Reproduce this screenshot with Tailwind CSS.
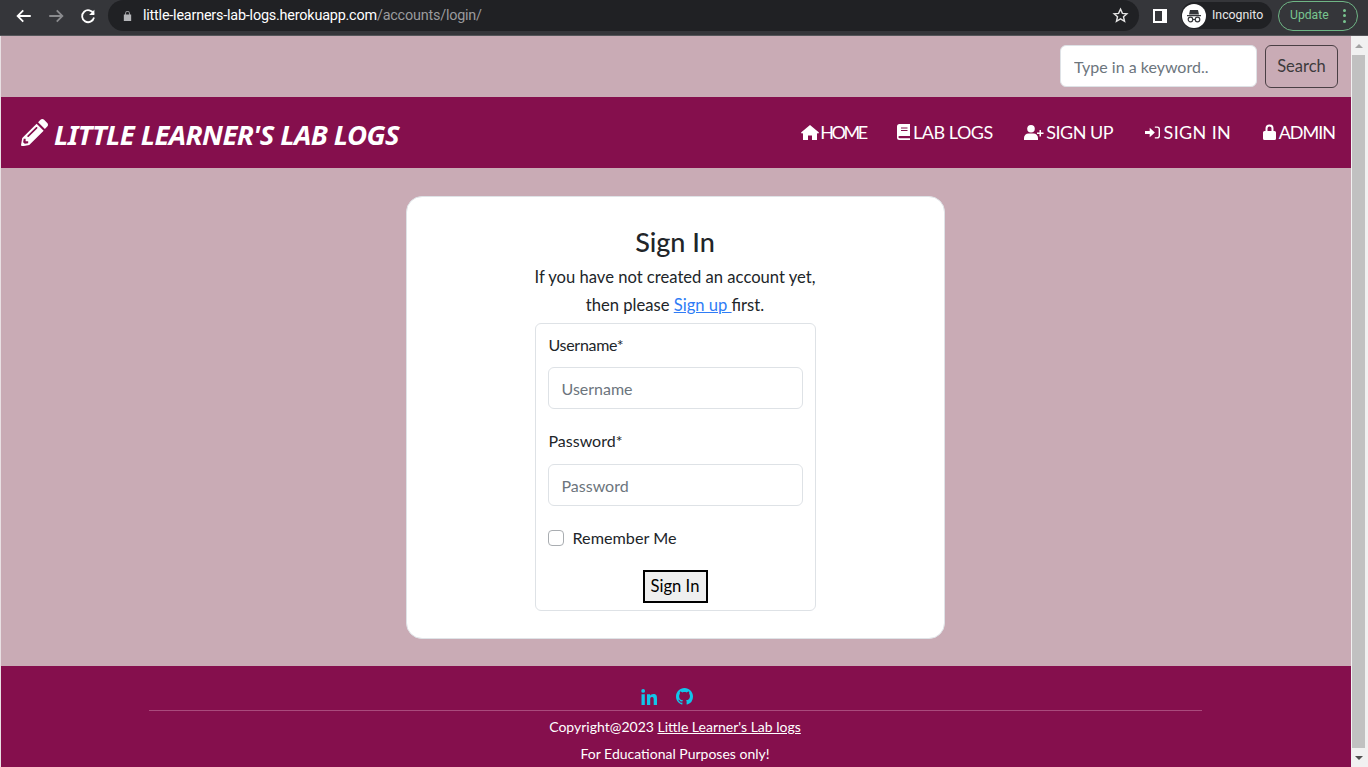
<!DOCTYPE html>
<html lang="en">
<head>
    <meta charset="UTF-8">
    <meta name="viewport" content="width=device-width, initial-scale=1.0">
    <title>Sign In</title>
    <script src="https://cdn.jsdelivr.net/npm/@tailwindcss/browser@4"></script>
</head>
<body class="h-[767px] w-[1368px] overflow-hidden bg-[#c9abb5] font-['Lato',sans-serif] text-[#212529]">
    <!-- browser toolbar -->
    <div class="flex h-[36px] items-center bg-[#35363a] border-b border-[#55565a] pb-[4px]">
        <div class="flex w-[108px] items-center pl-[15px] gap-[14px]">
            <svg class="size-[18px]" viewBox="0 0 24 24" fill="none" stroke="#fff" stroke-width="2.4"><path d="M21 12H4M11 4.5 3.5 12l7.5 7.5"/></svg>
            <svg class="size-[18px]" viewBox="0 0 24 24" fill="none" stroke="#8a8b8e" stroke-width="2.4"><path d="M3 12h17M13 4.5l7.5 7.5-7.5 7.5"/></svg>
            <svg class="size-[18px]" viewBox="0 0 24 24" fill="none" stroke="#fff" stroke-width="2.4"><path d="M19.5 9A8 8 0 1 0 20 14"/><path d="M20.5 3.5v7h-7" fill="#fff" stroke="none"/></svg>
        </div>
        <div class="flex h-[31px] w-[1031px] items-center rounded-full bg-[#202124] pl-[14px] pr-[10px]">
            <svg class="mr-[10px] size-[11px]" viewBox="0 0 12 12" fill="#b4b5b8"><path d="M2 5h8v7H2zM3.5 5V3.5a2.5 2.5 0 0 1 5 0V5H7.6V3.5a1.6 1.6 0 0 0-3.2 0V5z"/></svg>
            <span class="text-[14.4px] tracking-[-0.2px] text-white font-['Roboto',sans-serif]">little-learners-lab-logs.herokuapp.com<span class="text-[#9a9b9e]">/accounts/login/</span></span>
            <svg class="ml-auto size-[17px]" viewBox="0 0 24 24" fill="none" stroke="#e3e3e3" stroke-width="2"><path d="m12 3 2.7 6 6.3.6-4.8 4.2 1.5 6.4L12 16.800 6.300 20.200l1.500-6.400L3 9.600 9.300 9z"/></svg>
        </div>
        <svg class="ml-[13px] size-[16px]" viewBox="0 0 16 16"><path fill="#fff" d="M1 1h14v14H1z"/><path fill="#35363a" d="M3 3h7v10H3z"/></svg>
        <div class="ml-[13px] flex h-[27px] w-[91px] items-center rounded-full bg-[#202124] pl-[1px]">
            <div class="flex size-[24px] items-center justify-center rounded-full bg-white">
                <svg class="size-[20px]" viewBox="0 0 20 20" fill="#35363a"><path d="M3 9h14v1.2H3zM6 4h8l1 4.4H5z"/><circle cx="6.500" cy="13.500" r="2.300" fill="none" stroke="#35363a" stroke-width="1.200"/><circle cx="13.500" cy="13.500" r="2.300" fill="none" stroke="#35363a" stroke-width="1.200"/><path d="M8.500 13h3v1h-3z"/></svg>
            </div>
            <span class="ml-[6px] text-[12.3px] text-[#e8e8e8] font-['Roboto',sans-serif]">Incognito</span>
        </div>
        <div class="ml-[6px] flex h-[30px] w-[80px] items-center rounded-full border border-[#6fb585] pl-[11px]">
            <span class="text-[12.2px] text-[#78c48f] font-['Roboto',sans-serif]">Update</span>
            <span class="ml-[14px] flex flex-col gap-[2.5px]">
                <i class="block size-[3px] rounded-full bg-[#78c48f]"></i>
                <i class="block size-[3px] rounded-full bg-[#78c48f]"></i>
                <i class="block size-[3px] rounded-full bg-[#78c48f]"></i>
            </span>
        </div>
    </div>

    <div class="flex h-[731px]">
        <div class="flex w-[1351px] flex-col border-l border-[#e8e0e3]">
            <!-- search -->
            <form class="flex h-[61px] items-center justify-end gap-2 pr-[13px]">
                <input type="text" placeholder="Type in a keyword.." class="-mt-[1px] h-[42px] w-[197px] rounded-md border border-[#dee2e6] bg-white px-[13px] text-[16px] placeholder:text-[#6c757d]">
                <button type="button" class="h-[43px] w-[73px] rounded-md border border-[#4a3f44] text-[16.5px] text-[#3d3a3c]">Search</button>
            </form>

            <!-- navbar -->
            <nav class="flex h-[71px] items-center bg-[#850f4d] pl-[20px] pr-[16px] text-white">
                <svg class="size-[27px]" viewBox="0 0 512 512" fill="#fff"><path d="M497.900 142.100 452 188 324 60l45.900-45.900c18.700-18.700 49.100-18.700 67.900 0l60.100 60.100c18.800 18.700 18.800 49.100 0 67.900zM295.900 88 23.300 360.600 1.200 487.100c-3 17.100 11.900 32 29 28.900l126.500-22.200L429.300 221.200zM124.100 337.900c-6.400-6.400-6.400-16.400 0-22.800l160-160c6.400-6.400 16.400-6.400 22.800 0s6.400 16.400 0 22.800l-160 160c-6.400 6.400-16.400 6.400-22.800 0zM88 424h48v36.300l-64.500 11.300-31.100-31.100L51.700 376H88z"/></svg>
                <span class="ml-[6px] mt-[4px] font-['Noto_Sans',sans-serif] text-[27.6px] leading-none font-bold italic tracking-[-0.6px]">LITTLE LEARNER'S LAB LOGS</span>
                <div class="ml-auto flex items-center gap-[31.5px] text-[18px] -mt-[1px]">
                    <a class="flex items-center gap-[1px] tracking-[-2.5px]" href="#">
                        <svg class="h-[15px] w-[18px]" viewBox="0 0 18 15" fill="#fff"><path d="M9 0 0 7.500l1 1.200 1-.8V15h5v-4.500h4V15h5V7.900l1 .8 1-1.200z"/></svg>
                        HOME
                    </a>
                    <a class="flex items-center gap-[3px] tracking-[-0.5px]" href="#">
                        <svg class="h-[16px] w-[13px]" viewBox="0 0 13 16" fill="#fff"><path d="M2.500 0H13v12H2.500a1 1 0 0 0 0 2.200H13V16H2.500A2.500 2.500 0 0 1 0 13.500v-11A2.500 2.500 0 0 1 2.500 0z"/><path d="M4 3.500h6.500v1H4zM4 6h6.500v1H4z" fill="#850f4d"/></svg>
                        LAB LOGS
                    </a>
                    <a class="flex items-center gap-[2px] tracking-[-0.5px]" href="#">
                        <svg class="h-[15px] w-[20px]" viewBox="0 0 20 15" fill="#fff"><circle cx="7" cy="3.800" r="3.800"/><path d="M0 15v-2a4.500 4.500 0 0 1 4.500-4.500h5A4.500 4.500 0 0 1 14 13v2zM15.500 5h1.500v2.500h2.500V9H17v2.500h-1.500V9H13V7.500h2.500z"/></svg>
                        SIGN UP
                    </a>
                    <a class="flex items-center gap-[4px] tracking-[0.35px]" href="#">
                        <svg class="h-[13px] w-[15px]" viewBox="0 0 16 13" fill="#fff"><path d="M0 4.800h5V1.500l5.500 5-5.500 5V8.200H0z"/><path d="M10.500 0H13a3 3 0 0 1 3 3v7a3 3 0 0 1-3 3h-2.500v-1.500H13a1.500 1.500 0 0 0 1.500-1.500V3A1.500 1.500 0 0 0 13 1.500h-2.500z"/></svg>
                        SIGN IN
                    </a>
                    <a class="flex items-center gap-[3px] tracking-[-1px]" href="#">
                        <svg class="h-[16px] w-[13px]" viewBox="0 0 13 16" fill="#fff"><path d="M1.500 7H2.500V4.500a4 4 0 0 1 8 0V7h1A1.500 1.500 0 0 1 13 8.500v6a1.500 1.500 0 0 1-1.500 1.500h-10A1.500 1.500 0 0 1 0 14.500v-6A1.500 1.500 0 0 1 1.500 7zM4.500 7h4V4.500a2 2 0 0 0-4 0z"/></svg>
                        ADMIN
                    </a>
                </div>
            </nav>

            <!-- sign in card -->
            <main class="flex h-[498px] justify-center pt-[28px] pr-[2px]">
                <div class="flex h-[443px] w-[539px] flex-col items-center rounded-[16px] border border-[#dfe3e7] bg-white pt-[27px]">
                    <h1 class="text-[27px] leading-[36px] font-medium">Sign In</h1>
                    <p class="mt-[3px] text-[16.6px] leading-[28px]">If you have not created an account yet,</p>
                    <p class="text-[16.6px] leading-[28px]">then please <a href="#" class="text-[#2f7cf6] underline">Sign up </a>first.</p>
                    <form class="mt-[4px] h-[288px] w-[281px] rounded-md border border-[#dee2e6] px-[12px] pt-[9px] text-[16px]">
                        <label class="block pl-[1px] leading-[24px] tracking-[-0.3px]">Username*</label>
                        <input type="text" placeholder="Username" class="mt-[10px] block h-[42px] w-[255px] rounded-md border border-[#dee2e6] px-[13px] placeholder:text-[#6c757d]">
                        <label class="mt-[20px] block pl-[1px] leading-[24px]">Password*</label>
                        <input type="password" placeholder="Password" class="mt-[11px] block h-[42px] w-[255px] rounded-md border border-[#dee2e6] px-[13px] placeholder:text-[#6c757d]">
                        <label class="mt-[20px] flex h-[24px] items-center gap-[9px] text-[16.2px]">
                            <input type="checkbox" class="size-[16px] appearance-none rounded-[4px] border border-[#a9adb1] bg-white">
                            Remember Me
                        </label>
                        <div class="mt-[20px] flex justify-center">
                            <button type="button" class="h-[33px] w-[65px] border-2 border-black bg-[#efefef] text-[16.6px] text-black">Sign In</button>
                        </div>
                    </form>
                </div>
            </main>

            <!-- footer -->
            <footer class="flex h-[101px] flex-col items-center bg-[#850f4d] pr-[2px] text-white">
                <div class="flex h-[47px] w-[1053px] items-center justify-center gap-[19px] border-b border-[#a94a7c] pt-[17px] pr-[16px]">
                    <svg class="size-[16px]" viewBox="0 0 16 16" fill="#12c5ea"><path d="M.5 5.300h3.300V16H.5zM2.150 0a1.900 1.900 0 1 1 0 3.800 1.900 1.900 0 0 1 0-3.800zM6 5.300h3.150v1.500c.5-.9 1.600-1.750 3.300-1.750 3.400 0 3.550 2.250 3.550 5.200V16h-3.300v-5c0-1.300 0-2.900-1.700-2.900s-1.800 1.300-1.800 2.700V16H6z"/></svg>
                    <svg class="size-[17px]" viewBox="0 0 16 16" fill="#12c5ea"><path d="M8 0C3.580 0 0 3.580 0 8c0 3.540 2.290 6.530 5.470 7.590.4.070.55-.17.550-.38 0-.19-.01-.82-.01-1.490-2.010.37-2.530-.49-2.690-.94-.09-.23-.48-.94-.82-1.130-.28-.15-.68-.52-.01-.53.630-.01 1.080.58 1.230.82.720 1.210 1.870.87 2.330.66.070-.52.280-.87.510-1.070-1.780-.2-3.640-.89-3.640-3.950 0-.87.310-1.590.820-2.150-.08-.2-.36-1.020.08-2.120 0 0 .67-.21 2.200.82.640-.18 1.320-.27 2-.27s1.360.09 2 .27c1.530-1.040 2.200-.82 2.200-.82.44 1.100.16 1.920.08 2.120.51.560.82 1.270.82 2.150 0 3.070-1.870 3.750-3.650 3.950.29.250.54.730.54 1.480 0 1.070-.01 1.930-.01 2.200 0 .21.150.46.550.38A8.010 8.010 0 0 0 16 8c0-4.420-3.580-8-8-8z"/></svg>
                </div>
                <p class="mt-[2px] text-[14px] leading-[27px]">Copyright@2023 <a href="#" class="underline">Little Learner's Lab logs</a></p>
                <p class="text-[14px] leading-[27px]">For Educational Purposes only!</p>
            </footer>
        </div>

        <!-- scrollbar -->
        <div class="flex w-[17px] flex-col bg-[#f1f1f1]">
            <div class="flex h-[19px] items-center justify-center pr-[2px]">
                <i class="block size-0 border-x-[4px] border-b-[4px] border-x-transparent border-b-[#a3a3a3]"></i>
            </div>
            <div class="ml-[1px] h-[693px] w-[13px] bg-[#c1c1c1]"></div>
            <div class="flex h-[19px] items-center justify-center pr-[2px]">
                <i class="block size-0 border-x-[4px] border-t-[4px] border-x-transparent border-t-[#505050]"></i>
            </div>
        </div>
    </div>
</body>
</html>
